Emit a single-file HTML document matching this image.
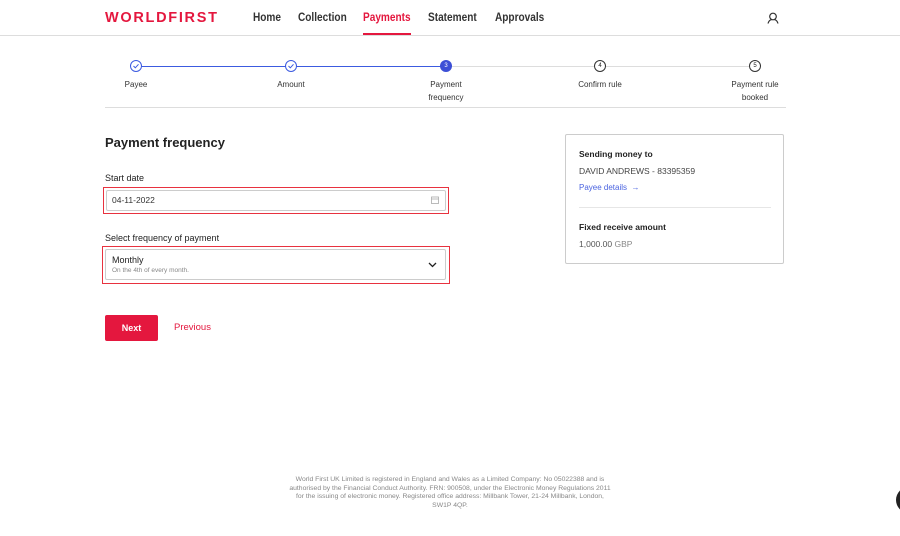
<!DOCTYPE html>
<html><head><meta charset="utf-8"><style>
*{margin:0;padding:0;box-sizing:border-box}
body{width:900px;height:536px;background:#fff;font-family:"Liberation Sans",Arial,sans-serif;color:#222;position:relative;overflow:hidden}
.abs{position:absolute}
.hdr{position:absolute;left:0;top:0;width:900px;height:36px;border-bottom:1px solid #ddd}
.logo{left:105px;top:10px;font-size:14.5px;font-weight:bold;color:#e4173e;letter-spacing:1.7px}
.nav{top:10px;font-size:12px;font-weight:bold;color:#333;transform:scaleX(0.84);transform-origin:left top;white-space:nowrap}
.step{position:absolute;top:60px;width:12px;height:12px;border-radius:50%;background:#fff;font-size:6px;text-align:center;line-height:10px}
.lbl{position:absolute;top:78px;font-size:8px;color:#333;text-align:center;width:80px;line-height:13px}
.box{position:absolute;border:1px solid #ccc;border-radius:2px;background:#fff}
.red{position:absolute;border:1.5px solid #e8323f}
</style></head><body>
<div class="hdr"></div>
<div class="abs logo">WORLDFIRST</div>
<div class="abs nav" style="left:253px">Home</div>
<div class="abs nav" style="left:298px">Collection</div>
<div class="abs nav" style="left:363px;color:#e4173e">Payments</div>
<div class="abs" style="left:363px;top:33px;width:48px;height:2px;background:#e4173e"></div>
<div class="abs nav" style="left:428px">Statement</div>
<div class="abs nav" style="left:495px">Approvals</div>
<svg class="abs" style="left:767px;top:12px" width="12" height="12" viewBox="0 0 12 12"><circle cx="6" cy="4.5" r="3.3" fill="none" stroke="#333" stroke-width="1.2"/><path d="M1 11.5 Q2 8 4.5 7.7 M11 11.5 Q10 8 7.5 7.7" fill="none" stroke="#333" stroke-width="1.2"/></svg>

<div class="abs" style="left:136px;top:65.5px;width:310px;height:1.5px;background:#3c5be0"></div>
<div class="abs" style="left:446px;top:66px;width:309px;height:1px;background:#ddd"></div>
<div class="step" style="left:130px;border:1.2px solid #3c5be0"><svg width="10" height="10" viewBox="0 0 10 10"><path d="M2.5 5 L4.3 6.8 L7.5 3.3" fill="none" stroke="#3c5be0" stroke-width="1"/></svg></div>
<div class="step" style="left:285px;border:1.2px solid #3c5be0"><svg width="10" height="10" viewBox="0 0 10 10"><path d="M2.5 5 L4.3 6.8 L7.5 3.3" fill="none" stroke="#3c5be0" stroke-width="1"/></svg></div>
<div class="step" style="left:440px;background:#3c4fd6;color:#fff;line-height:12px">3</div>
<div class="step" style="left:594px;border:1.2px solid #333">4</div>
<div class="step" style="left:749px;border:1.2px solid #333">5</div>
<div class="lbl" style="left:96px">Payee</div>
<div class="lbl" style="left:251px">Amount</div>
<div class="lbl" style="left:406px">Payment<br>frequency</div>
<div class="lbl" style="left:560px">Confirm rule</div>
<div class="lbl" style="left:715px">Payment rule<br>booked</div>
<div class="abs" style="left:105px;top:107px;width:681px;height:1px;background:#ddd"></div>

<div class="abs" style="left:105px;top:135px;font-size:13px;font-weight:bold;color:#222">Payment frequency</div>
<div class="abs" style="left:105px;top:173px;font-size:9px;color:#222">Start date</div>
<div class="red" style="left:103px;top:187px;width:346px;height:27px"></div>
<div class="box" style="left:106px;top:190px;width:340px;height:21px"></div>
<div class="abs" style="left:112px;top:195px;font-size:8.5px;color:#333">04-11-2022</div>
<svg class="abs" style="left:431px;top:196px" width="8" height="8" viewBox="0 0 8 8"><rect x="0.5" y="1" width="7" height="6.5" fill="none" stroke="#aaa" stroke-width="0.8"/><path d="M0.5 3h7" stroke="#aaa" stroke-width="0.8"/></svg>

<div class="abs" style="left:105px;top:233px;font-size:9px;color:#222">Select frequency of payment</div>
<div class="red" style="left:102px;top:246px;width:348px;height:38px"></div>
<div class="box" style="left:105px;top:249px;width:341px;height:31px"></div>
<div class="abs" style="left:112px;top:255px;font-size:9px;color:#222">Monthly</div>
<div class="abs" style="left:112px;top:267px;font-size:6.5px;color:#888">On the 4th of every month.</div>
<svg class="abs" style="left:428px;top:262px" width="9" height="6" viewBox="0 0 9 6"><path d="M1 1 L4.5 4.5 L8 1" fill="none" stroke="#222" stroke-width="1.3"/></svg>

<div class="abs" style="left:105px;top:315px;width:53px;height:26px;background:#e4173e;border-radius:2px;color:#fff;font-size:9px;font-weight:bold;text-align:center;line-height:26px">Next</div>
<div class="abs" style="left:174px;top:322px;font-size:9.5px;color:#e4173e">Previous</div>

<div class="box" style="left:565px;top:134px;width:219px;height:130px"></div>
<div class="abs" style="left:579px;top:149px;font-size:8.5px;font-weight:bold;color:#222">Sending money to</div>
<div class="abs" style="left:579px;top:166px;font-size:8.5px;color:#444">DAVID ANDREWS - 83395359</div>
<div class="abs" style="left:579px;top:183px;font-size:8px;color:#4a63e0">Payee details &nbsp;→</div>
<div class="abs" style="left:579px;top:207px;width:192px;height:1px;background:#e6e6e6"></div>
<div class="abs" style="left:579px;top:222px;font-size:8.5px;font-weight:bold;color:#222">Fixed receive amount</div>
<div class="abs" style="left:579px;top:239px;font-size:8.5px;color:#555">1,000.00 <span style="color:#888">GBP</span></div>

<div class="abs" style="left:288px;top:476px;width:324px;font-size:6.8px;color:#888;text-align:center;line-height:8.6px">World First UK Limited is registered in England and Wales as a Limited Company: No 05022388 and is authorised by the Financial Conduct Authority. FRN: 900508, under the Electronic Money Regulations 2011 for the issuing of electronic money. Registered office address: Millbank Tower, 21-24 Millbank, London, SW1P 4QP.</div>
<div class="abs" style="left:896px;top:487px;width:26px;height:26px;border-radius:50%;background:#222"></div>
</body></html>
